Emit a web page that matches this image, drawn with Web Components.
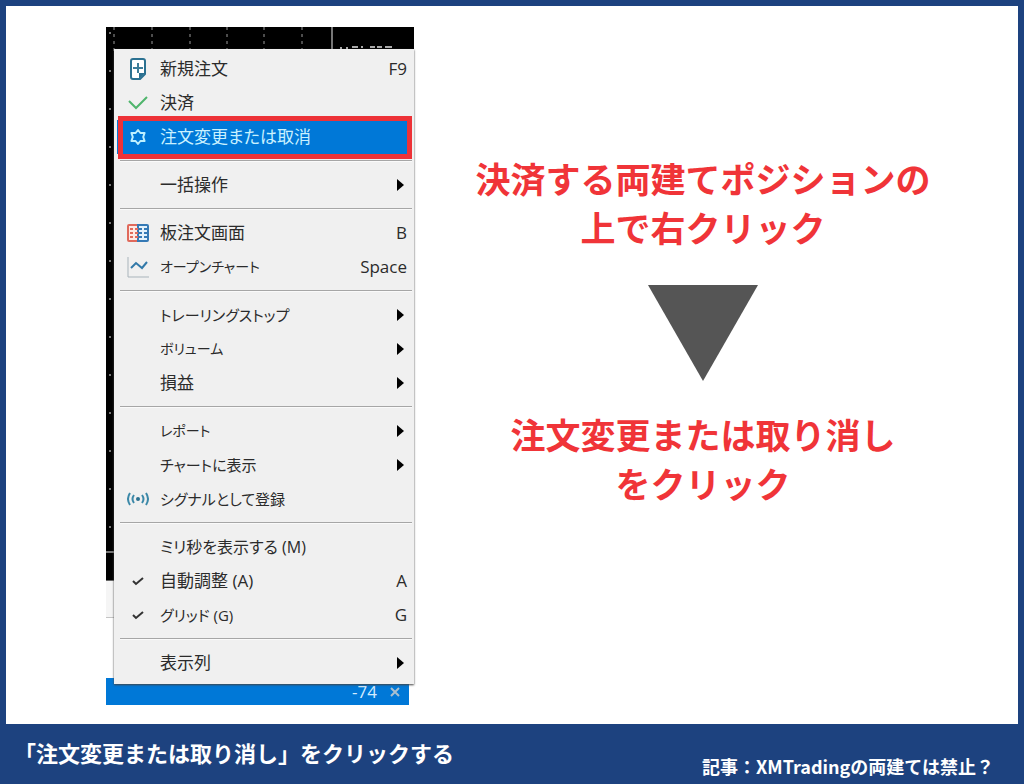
<!DOCTYPE html>
<html lang="ja">
<head>
<meta charset="utf-8">
<meta name="viewport" content="width=device-width, initial-scale=1">
<title>「注文変更または取り消し」をクリックする</title>
<style>
body { margin: 0; font-family: "Noto Sans CJK JP", sans-serif; }
</style>
</head>
<body>
<guide-card>
  <chart-shot slot="shot">
    <context-menu>
      <menu-item icon="new" keys="F9">新規注文</menu-item>
      <menu-item icon="tick">決済</menu-item>
      <menu-item icon="gear" active>注文変更または取消</menu-item>
      <menu-line></menu-line>
      <menu-item submenu>一括操作</menu-item>
      <menu-line></menu-line>
      <menu-item icon="depth" keys="B">板注文画面</menu-item>
      <menu-item icon="chart" keys="Space" text="small">オープンチャート</menu-item>
      <menu-line></menu-line>
      <menu-item submenu text="kana">トレーリングストップ</menu-item>
      <menu-item submenu text="small">ボリューム</menu-item>
      <menu-item submenu>損益</menu-item>
      <menu-line></menu-line>
      <menu-item submenu text="small">レポート</menu-item>
      <menu-item submenu text="kana">チャートに表示</menu-item>
      <menu-item icon="signal" text="kana">シグナルとして登録</menu-item>
      <menu-line></menu-line>
      <menu-item text="mixed">ミリ秒を表示する (M)</menu-item>
      <menu-item icon="check" keys="A">自動調整 (A)</menu-item>
      <menu-item icon="check" keys="G" text="kana">グリッド (G)</menu-item>
      <menu-line></menu-line>
      <menu-item submenu>表示列</menu-item>
    </context-menu>
  </chart-shot>
  <step-list slot="steps">
    <p>決済する両建てポジションの<br>上で右クリック</p>
    <p>注文変更または取り消し<br>をクリック</p>
  </step-list>
  <span slot="caption">「注文変更または取り消し」をクリックする</span>
  <span slot="article">記事：XMTradingの両建ては禁止？</span>
</guide-card>

<script>
const define = (name, html, setup) => customElements.define(name, class extends HTMLElement {
  connectedCallback() {
    if (this.shadowRoot) return;
    const t = document.createElement('template');
    t.innerHTML = html;
    this.attachShadow({ mode: 'open' }).append(t.content.cloneNode(true));
    if (setup) setup(this, this.shadowRoot);
  }
});

const icons = {
  new: '<path d="M13 21H6q-2 0-2-2V3q0-2 2-2h10q2 0 2 2v13z" fill="#fff" stroke="#2b7191" stroke-width="2" stroke-linejoin="round"/><path d="M18 15l-6 6v-6z" fill="#2b7191"/><path d="M11 5v10M6 10h10" stroke="#3d7d99" stroke-width="2" fill="none"/>',
  tick: '<path d="M2 9l7 7L20 5" fill="none" stroke="#4fb56c" stroke-width="2"/>',
  gear: '<path d="M11 4l2.4 3h4.2l-1.4 4 1.4 4h-4.2L11 18l-2.400-3H4.400l1.400-4-1.400-4h4.200z" fill="none" stroke="#bdf0ff" stroke-width="2" stroke-linejoin="round"/>',
  depth: '<path d="M11 3H2q-1 0-1 1v14q0 1 1 1h9" fill="#fde9e4" stroke="#e06a5c" stroke-width="2"/><path d="M11 3h9q1 0 1 1v14q0 1-1 1h-9z" fill="#e2f1fb" stroke="#3579b5" stroke-width="2"/><path d="M3 7h3M8 7h3M3 11h3M8 11h3M3 15h3M8 15h3" stroke="#e06a5c" stroke-width="2"/><path d="M12 7h3M17 7h3M12 11h3M17 11h3M12 15h3M17 15h3" stroke="#3579b5" stroke-width="2"/>',
  chart: '<path d="M1 1v20h21" fill="none" stroke="#a9b4bb" stroke-width="1"/><path d="M4 12l5-5 6 5 5-6" fill="none" stroke="#3279a9" stroke-width="2"/>',
  signal: '<g fill="none" stroke="#3b88a8" stroke-width="2"><path d="M3 5Q-1 11 3 17M19 5q4 6 0 12M7 7q-3 4 0 8M15 7q3 4 0 8"/></g><circle cx="11" cy="11" r="2" fill="#2b7191"/>',
  check: '<path d="M6 11l3 3 7-6" fill="none" stroke="#333" stroke-width="2"/>'
};

define('guide-card', `
<style>
:host { display: flex; flex-direction: column; min-height: 100vh; box-sizing: border-box; padding: 6px 6px 0; background: #1d427f; }
main { flex: 1; display: grid; grid-template-columns: auto 1fr; align-items: start; padding: 21px 26px 18px 100px; background: #fff; }
footer { display: flex; justify-content: space-between; height: 60px; padding: 0 24px 0 8px; color: #fff; font-weight: 700; }
.caption { font-size: 22px; line-height: 56px; }
.article { font-size: 18px; line-height: 28px; align-self: flex-end; padding-bottom: 4px; }
</style>
<main><slot name="shot"></slot><slot name="steps"></slot></main>
<footer><div class="caption"><slot name="caption"></slot></div><div class="article"><slot name="article"></slot></div></footer>`);

define('chart-shot', `
<style>
:host { display: grid; width: 308px; }
.back, ::slotted(*) { grid-area: 1 / 1; }
.back { display: flex; flex-direction: column; }
.plot { flex: 1; position: relative; background: #000; border-bottom: 1px solid #666; overflow: hidden; }
.plot svg { position: absolute; inset: 0; width: 100%; height: 100%; }
.tabs { height: 36px; background: #f5f5f5; border-bottom: 1px solid #c4c4c4; }
.gap { height: 60px; }
.row { height: 27px; margin-right: 5px; padding-right: 8px; display: flex; justify-content: flex-end; align-items: center; gap: 12px; background: #0078d7; color: #d4ecff; font: 17px/30px "Open Sans", sans-serif; }
button { all: unset; width: 12px; height: 12px; display: flex; }
::slotted(*) { margin: 22px 0 21px 8px; z-index: 1; }
</style>
<div class="back">
  <div class="plot"><svg aria-hidden="true">
    <path d="M8 0v24M46 0v24M84 0v24M121 0v24M158 0v24M196 0v24" stroke="#999" stroke-dasharray="3 4"/>
    <path d="M226 0v24M0 525h8" stroke="#eee"/>
    <path d="M4 5v520" stroke="#777" stroke-width="2" stroke-dasharray="2 36"/>
    <path d="M234 21h2M240 21h2M246 20h6M255 20h2M264 20h5M271 20h5M279 20h7" stroke="#aaa" stroke-width="2"/>
  </svg></div>
  <div class="tabs"></div><div class="gap"></div>
  <div class="row"><span>-74</span><button aria-label="閉じる"><svg width="12" height="12"><path d="M2 2l8 8M10 2l-8 8" stroke="#a9bfcf" stroke-width="2"/></svg></button></div>
</div>
<slot></slot>`);

define('context-menu', `
<style>
:host { display: block; padding: 3px 2px 4px 3px; background: #f0f0f0; box-shadow: 0 1px 2px #444; }
</style>
<div role="menu"><slot></slot></div>`);

define('menu-line', `
<style>
:host { display: block; height: 14px; padding: 6px 0 0 3px; box-sizing: border-box; }
hr { margin: 0; border: 0; border-top: 1px solid #a6a6a6; border-bottom: 1px solid #fafafa; }
</style><hr>`);

define('menu-item', `
<style>
:host { display: block; position: relative; color: #2b2b2b; }
button { all: unset; box-sizing: border-box; width: 100%; height: 34px; display: grid; grid-template-columns: 22px 1fr auto; column-gap: 11px; align-items: center; padding: 0 5px 0 10px; font-size: 17px; line-height: 34px; white-space: nowrap; }
.label { font-family: "Open Sans", "Noto Sans CJK JP", sans-serif; font-feature-settings: "palt"; }
:host([text="mixed"]) .label { font-size: 16px; }
:host([text="kana"]) .label { font-size: 15px; }
:host([text="small"]) .label { font-size: 14px; }
.keys { font-family: "Open Sans", sans-serif; }
svg { display: block; }
.arrow { margin-right: 3px; }
:host([active]) { background: #0078d7; color: #c9f1ff; z-index: 1; }
:host([active])::after { content: ""; position: absolute; inset: -4px 0 -5px 1px; border: 5px solid #ed3237; }
</style>
<button role="menuitem"><svg class="icon" width="22" height="22" aria-hidden="true"></svg><span class="label"><slot></slot></span><span class="keys"></span></button>`,
(host, root) => {
  root.querySelector('.icon').innerHTML = icons[host.getAttribute('icon')] || '';
  const end = root.querySelector('.keys');
  if (host.hasAttribute('submenu')) end.innerHTML = '<svg class="arrow" width="7" height="12" aria-hidden="true"><path d="M0 0l7 6-7 6z" fill="#000"/></svg>';
  else end.textContent = host.getAttribute('keys') || '';
});

define('step-list', `
<style>
:host { display: flex; flex-direction: column; align-items: center; padding-top: 126px; color: #f03438; font-size: 35px; font-weight: 700; line-height: 49px; text-align: center; }
svg { display: block; margin: 34px 0 28px; }
::slotted(p) { margin: 0; }
</style>
<slot name="first"></slot><svg width="110" height="96" aria-hidden="true"><path d="M0 0h110L55 96z" fill="#555"/></svg><slot></slot>`,
(host) => host.querySelector('p').slot = 'first');
</script>
</body>
</html>
